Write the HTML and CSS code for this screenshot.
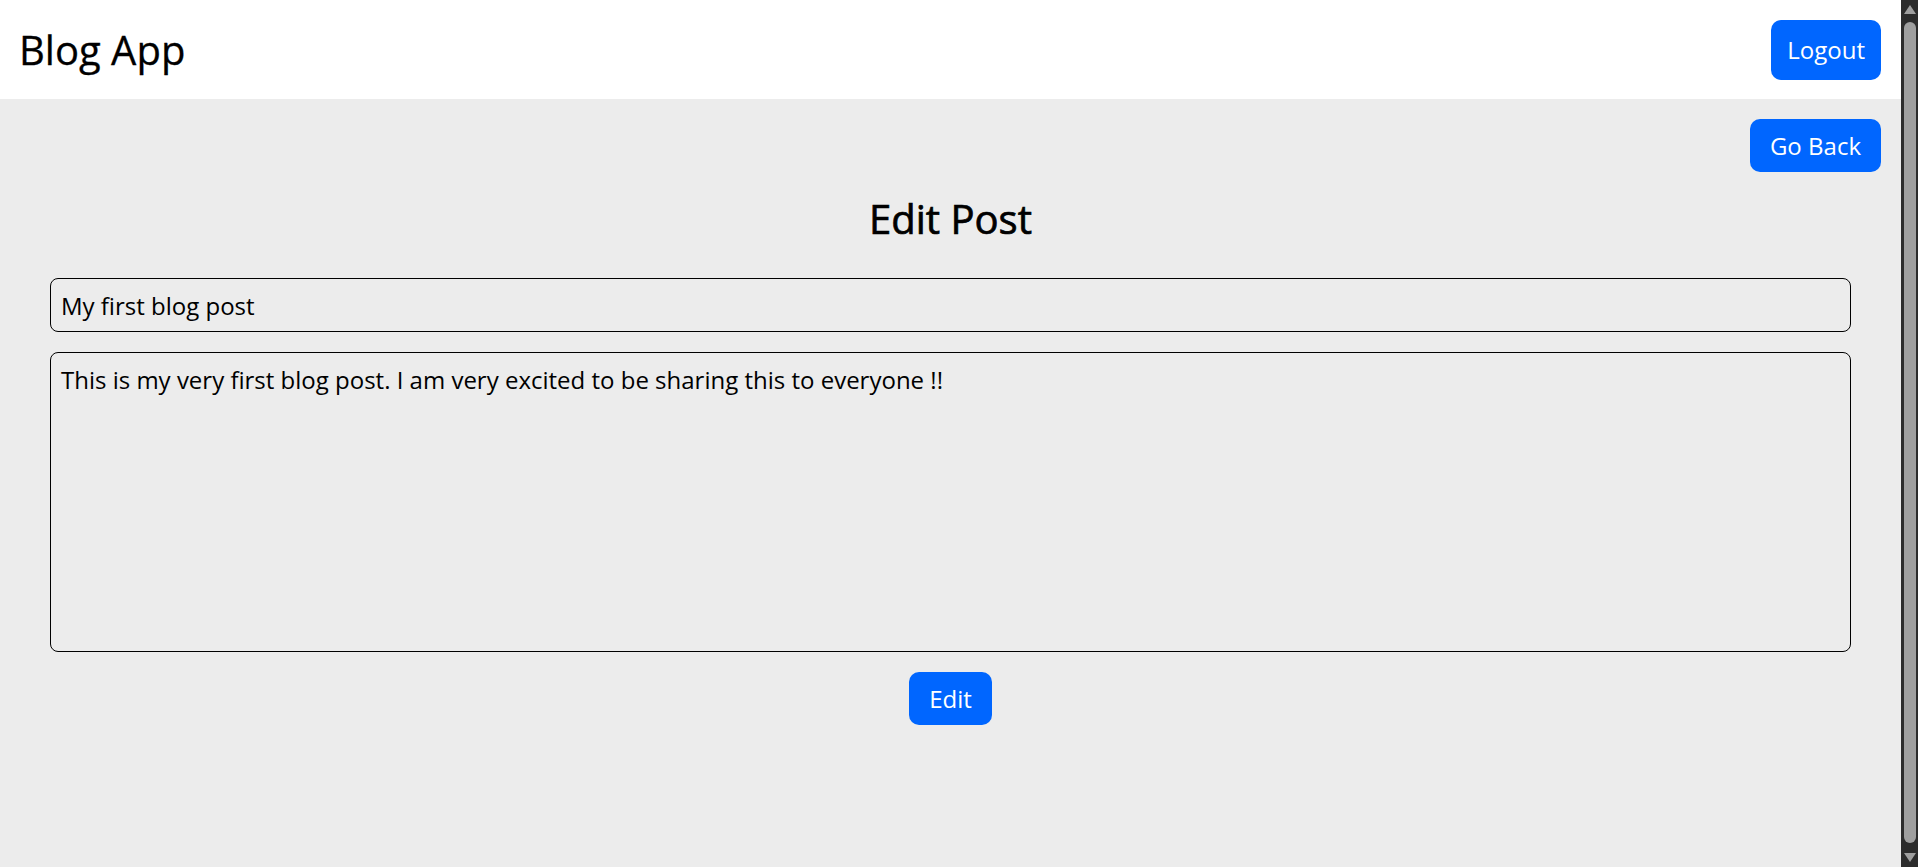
FILE: index.html
```html
<!DOCTYPE html>
<html lang="en">
<head>
<meta charset="utf-8">
<title>Blog App</title>
<link rel="stylesheet" href="styles.css">
</head>
<body>
<div class="app">
  <header class="topbar">
    <h1 class="brand">Blog App</h1>
    <button class="btn btn-logout">Logout</button>
  </header>
  <main class="page">
    <div class="back-row">
      <button class="btn btn-primary">Go Back</button>
    </div>
    <h2 class="page-title">Edit Post</h2>
    <form class="post-form">
      <input class="field field-title" type="text" value="My first blog post">
      <textarea class="field field-body">This is my very first blog post. I am very excited to be sharing this to everyone !!</textarea>
      <button class="btn btn-primary" type="button">Edit</button>
    </form>
  </main>
</div>
<div class="scrollbar" aria-hidden="true">
  <div class="sb-arrow sb-up"></div>
  <div class="sb-thumb"></div>
  <div class="sb-arrow sb-down"></div>
</div>
</body>
</html>
```

FILE: styles.css
```css
html, body {
  height: 100%;
  margin: 0;
  overflow: hidden;
}
body {
  display: flex;
  font-family: "Open Sans", "Noto Sans", sans-serif;
  color: #000;
  background: #ececec;
}
.app {
  flex: 1;
  min-width: 0;
  height: 100vh;
  overflow: hidden;
}

/* scrollbar */
.scrollbar {
  width: 17px;
  flex: none;
  height: 100vh;
  background: #2c2c2c;
  display: flex;
  flex-direction: column;
}
.sb-arrow {
  height: 17px;
  flex: none;
  display: flex;
  justify-content: center;
  align-items: center;
}
.sb-arrow::before {
  content: "";
  width: 0;
  height: 0;
  border-left: 6px solid transparent;
  border-right: 6px solid transparent;
}
.sb-up::before {
  border-bottom: 9px solid #9f9f9f;
  margin-top: 2px;
}
.sb-down::before {
  border-top: 9px solid #9f9f9f;
  margin-bottom: 2px;
}
.sb-thumb {
  flex: 1;
  margin: 5px 2px 7px 3px;
  background: #9f9f9f;
  border-radius: 6px;
}

.topbar {
  height: 99px;
  box-sizing: border-box;
  background: #fff;
  display: flex;
  align-items: center;
  justify-content: space-between;
  padding: 0 20px 0 19px;
}
.brand {
  margin: 0;
  font-size: 40px;
  font-weight: 400;
  -webkit-text-stroke: 0.3px #000;
}
.btn {
  font-family: inherit;
  border: none;
  border-radius: 10px;
  background: #0066ff;
  color: #fff;
  cursor: pointer;
}
.btn-logout {
  height: 60px;
  padding: 0 16px;
  font-size: 24px;
}
.btn-primary {
  height: 53px;
  padding: 0 20px;
  font-size: 24px;
}
.page {
  box-sizing: border-box;
  padding: 20px 20px 0;
}
.back-row {
  display: flex;
  justify-content: flex-end;
}
.page-title {
  margin: 19px 0 0;
  text-align: center;
  font-size: 40px;
  font-weight: 400;
  line-height: normal;
  -webkit-text-stroke: 0.7px #000;
}
.post-form {
  display: flex;
  flex-direction: column;
  align-items: center;
  gap: 20px;
  margin-top: 32px;
  padding: 0 30px;
}
.field {
  box-sizing: border-box;
  width: 100%;
  border: 1px solid #000;
  border-radius: 8px;
  background: #ececec;
  font-family: inherit;
  font-size: 24px;
  color: #000;
  padding: 10px;
  margin: 0;
}
.field-title {
  height: 54px;
}
.field-body {
  height: 300px;
  resize: none;
  line-height: normal;
}
```
